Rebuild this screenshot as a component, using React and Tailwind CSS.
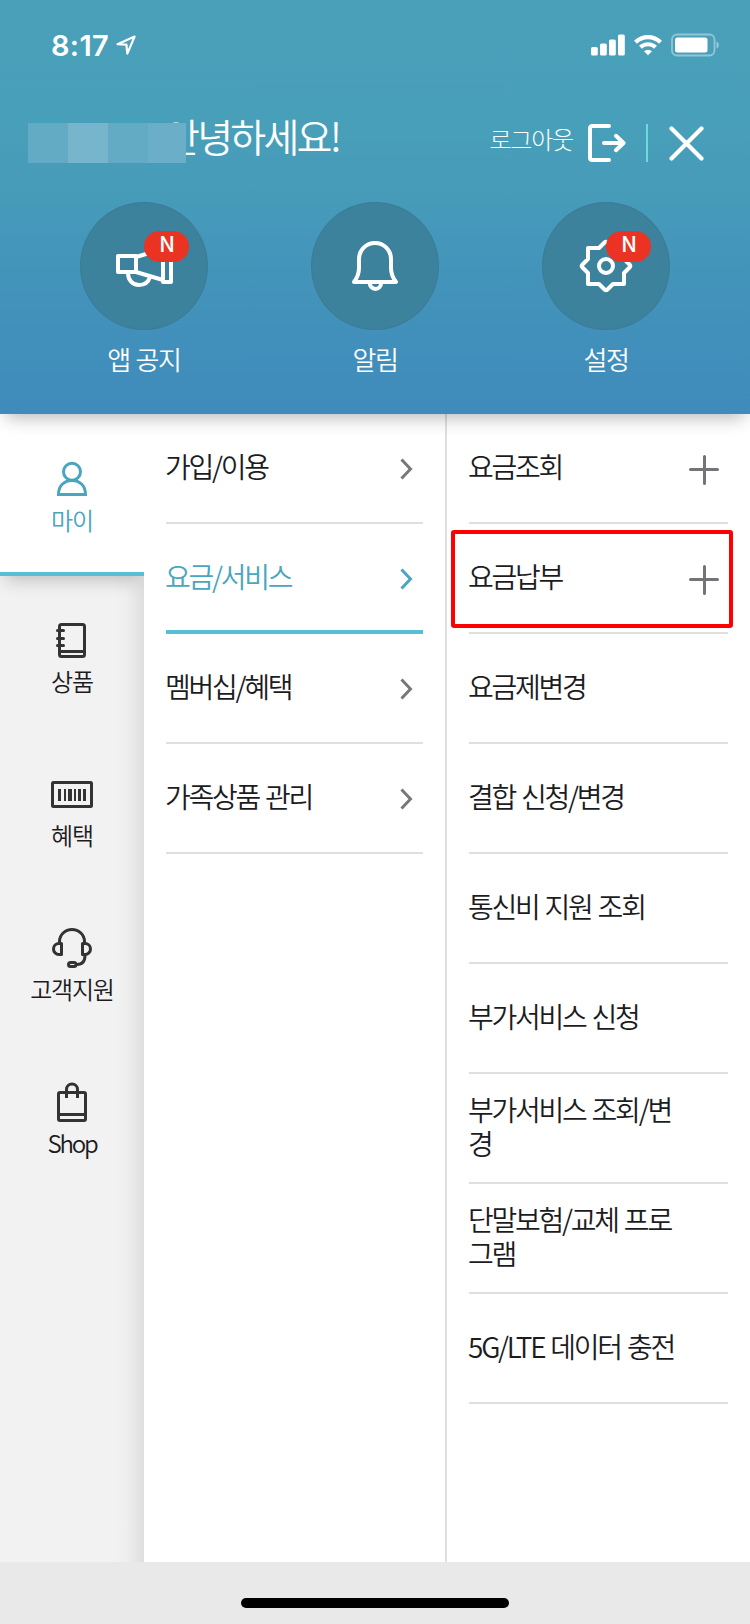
const font = "font-['Noto_Sans_CJK_KR','Noto_Sans',sans-serif]";

function StatusBar() {
  return (
    <div className="flex h-[88px] items-center justify-between pl-[51px] pr-[30px] pt-0.5">
      <div className="flex items-center gap-[7px]">
        <span className="font-['Inter',sans-serif] text-[29px] font-semibold leading-none tracking-[0.01em]">8:17</span>
        <svg width="20" height="20" viewBox="0 0 20 20" fill="none" stroke="white" strokeWidth="2.2" strokeLinejoin="round">
          <path d="M1.5 9.2 18.6 1.6 11.3 18.6 10.4 9.6Z" />
        </svg>
      </div>
      <div className="flex items-center gap-[9px]">
        <svg width="34" height="22" viewBox="0 0 34 22" fill="white">
          <rect x="0" y="13" width="6.8" height="8.5" rx="1.6" />
          <rect x="9" y="9.500" width="6.8" height="12" rx="1.6" />
          <rect x="18" y="5.500" width="6.8" height="16" rx="1.6" />
          <rect x="27" y="0.500" width="6.8" height="21" rx="1.6" />
        </svg>
        <svg width="28" height="22" viewBox="0 0 28 22" fill="none" stroke="white" strokeWidth="4.200">
          <path d="M1.500 8.300a17.800 17.800 0 0 1 25 0" />
          <path d="M6.500 13.300a10.800 10.800 0 0 1 15 0" />
          <path d="M14 21.200 10 17.200a6 6 0 0 1 8 0Z" fill="white" stroke="none" />
        </svg>
        <svg width="49" height="24" viewBox="0 0 49 24">
          <rect x="1" y="1.500" width="42.500" height="21" rx="5" fill="none" stroke="white" strokeOpacity="0.4" strokeWidth="1.800" />
          <rect x="4" y="4.500" width="32.500" height="15" rx="2.500" fill="white" />
          <path d="M45.500 8.500c3 .8 3 6.200 0 7Z" fill="white" fillOpacity="0.450" />
        </svg>
      </div>
    </div>
  );
}

function TopBar() {
  return (
    <div className="flex h-[108px] items-center pl-7 pr-[46px] pt-0.5">
      <div className="relative z-10 flex h-10 w-[158px]">
        <div className="w-10 bg-[#63abc5]" />
        <div className="w-10 bg-[#76b5cb]" />
        <div className="w-10 bg-[#63aac5]" />
        <div className="w-[38px] bg-[#6aaec7]" />
      </div>
      <h1 className="-ml-[22px] -mt-4 whitespace-nowrap text-[39px] font-[350] leading-[48px] tracking-[-0.070em]">안녕하세요!</h1>
      <div className="ml-auto flex items-center">
        <span className="-mt-[9px] whitespace-nowrap text-[24px] font-light leading-[36px] tracking-[-0.050em]">로그아웃</span>
        <svg className="ml-[15px]" width="38" height="38" viewBox="0 0 38 38" fill="none" stroke="white" strokeWidth="4" strokeLinecap="round" strokeLinejoin="round">
          <path d="M21 2H4.500Q2 2 2 4.500V33.500Q2 36 4.500 36H21" />
          <path d="M16 19H35M28 11.800 35.500 19 28 26.200" />
        </svg>
        <div className="ml-5 h-[38px] w-0.5 bg-[#6cdcd8]" />
        <svg className="ml-[21px]" width="35" height="35" viewBox="0 0 35 35" stroke="white" strokeWidth="4.200" strokeLinecap="round">
          <path d="M2.500 2.500 32.500 32.500M32.500 2.500 2.500 32.500" />
        </svg>
      </div>
    </div>
  );
}

function Shortcut({ label, badge, children }) {
  return (
    <div className="flex w-[231px] flex-col items-center">
      <div className="relative size-32 rounded-full border border-[#39758e]/50 bg-[#3d829d]">
        <svg className="-m-px" width="128" height="128" viewBox="0 0 128 128" fill="none" stroke="white" strokeWidth="4" strokeLinejoin="round">
          {children}
        </svg>
        {badge && (
          <div className="absolute left-[63px] top-7 flex h-[31px] w-[45px] justify-center rounded-2xl bg-[#ea3323] pl-px text-[22px] font-medium leading-[22px]">
            N
          </div>
        )}
      </div>
      <span className="mt-2.5 text-[26px] font-[350] leading-[38px] tracking-[-0.050em] [word-spacing:1px]">{label}</span>
    </div>
  );
}

function Header() {
  return (
    <header className="relative z-10 h-[414px] bg-[linear-gradient(180deg,#4aa0b9_0px,#489fb9_130px,#469bb9_200px,#4394bb_270px,#3f8bbb_414px)] text-white shadow-[0_10px_16px_-6px_rgba(30,30,40,0.3)]">
      <StatusBar />
      <TopBar />
      <div className="mt-1.5 flex justify-center">
        <Shortcut label="앱 공지" badge>
          <rect x="38" y="54" width="18" height="16" />
          <path d="M56 55 83 47M56 70 83 78" />
          <rect x="83" y="44" width="8" height="36" />
          <path d="M48 71c0 7 4.500 12 11 12 5.500 0 9.500-3 11-8" />
        </Shortcut>
        <Shortcut label="알림">
          <path d="M43 80C46 76 48 72 48 66V57a16 16 0 0 1 32 0V66c0 6 2 10 5 14Z" />
          <path d="M58.700 81a5.700 6 0 0 0 11.400 0" />
        </Shortcut>
        <Shortcut label="설정" badge>
          <path d="M62.500 40.500 57 46H46V57L40.500 62.500Q39 64 40.500 65.500L46 71V82H57L62.500 87.500Q64 89 65.500 87.500L71 82H82V71L87.500 65.500Q89 64 87.500 62.500L82 57V46H71L65.500 40.500Q64 39 62.500 40.500Z" />
          <circle cx="64" cy="64" r="7" />
        </Shortcut>
      </div>
    </header>
  );
}

const icons = {
  person: (
    <>
      <circle cx="21" cy="11.800" r="8.500" />
      <path d="M7.500 34.500C7.500 26 13 20.500 21 20.500S34.500 26 34.500 34.500Z" strokeLinejoin="miter" />
    </>
  ),
  notebook: (
    <>
      <rect x="8.500" y="3.500" width="25" height="32" rx="2" />
      <path d="M9 30.500H33M6.500 9.500H12.500M6.500 17.500H12.500M6.500 24.500H12.500" strokeLinecap="round" />
    </>
  ),
  barcode: (
    <>
      <rect x="1.500" y="7.500" width="39" height="24" rx="1" />
      <g fill="currentColor" stroke="none">
        <rect x="7" y="14" width="3" height="12" />
        <rect x="13" y="14" width="2" height="12" />
        <rect x="17" y="14" width="4" height="12" />
        <rect x="23" y="14" width="2" height="12" />
        <rect x="27" y="14" width="3" height="12" />
        <rect x="32" y="14" width="3" height="12" />
      </g>
    </>
  ),
  headset: (
    <>
      <path d="M8.500 15V12.500a12.500 12 0 0 1 25 0V15" />
      <path d="M10.500 14.500H8a5.500 5.500 0 0 0 0 11H10.500ZM31.500 14.500H34a5.500 5.500 0 0 1 0 11H31.500Z" />
      <path d="M34 26C34 32 31.500 35.500 26 35.500" />
      <rect x="17.500" y="33.500" width="7.500" height="4" rx="2" />
    </>
  ),
  bag: (
    <>
      <rect x="7.500" y="9.500" width="27" height="28" rx="1.500" />
      <path d="M8 31.500H34M15.500 15V6.500a5.500 5.500 0 0 1 11 0V15" />
    </>
  ),
};

function TabIcon({ name }) {
  return (
    <svg width="42" height="40" viewBox="0 0 42 40" overflow="visible" fill="none" stroke="currentColor" strokeWidth="3" strokeLinejoin="round">
      {icons[name]}
    </svg>
  );
}

function SideTab({ icon, label }) {
  return (
    <div className="flex h-[154px] flex-col items-center text-[#333]">
      <TabIcon name={icon} />
      <span className={icon === "bag" ? "mt-0.5 text-[24px] font-[350] leading-9 tracking-[-0.090em] text-[#1c1c1e]" : "mt-0.5 text-[24px] font-[350] leading-9 tracking-[-0.050em] text-[#1c1c1e]"}>{label}</span>
    </div>
  );
}

function Sidebar() {
  return (
    <nav className="w-36 bg-[#f2f2f2] bg-[linear-gradient(270deg,#dedede_0px,#e6e6e6_8px,#efefef_18px,#f2f2f2_28px)]">
      <div className="flex h-[162px] flex-col items-center border-b-4 border-[#57bfd5] bg-white pt-[46px] text-[#4aa5be] shadow-[0_10px_16px_-6px_rgba(30,30,40,0.25)]">
        <TabIcon name="person" />
        <span className="mt-0.5 text-[24px] font-[350] leading-9 tracking-[-0.050em]">마이</span>
      </div>
      <div className="pt-[45px]">
        <SideTab icon="notebook" label="상품" />
        <SideTab icon="barcode" label="혜택" />
        <SideTab icon="headset" label="고객지원" />
        <SideTab icon="bag" label="Shop" />
      </div>
    </nav>
  );
}

function CategoryRow({ label, active }) {
  return (
    <li className={active ? "flex h-[110px] items-center justify-between border-b-4 border-[#57bfd5] pr-[10px] text-[#4aa5be]" : "flex h-[110px] items-center justify-between border-b-2 border-[#dfdfdf] pr-[10px] text-[#77787b]"}>
      <span className={active ? "-ml-px -mt-[3px] text-[28px] font-[350] leading-[34px] tracking-[-0.080em]" : "-ml-px -mt-1 text-[28px] font-[350] leading-[34px] tracking-[-0.080em] text-[#1c1c1e] [word-spacing:2px]"}>{label}</span>
      <svg className={active ? "mt-1" : "mt-0.5"} width="13" height="22" viewBox="0 0 13 22" fill="none" stroke="currentColor" strokeWidth="3">
        <path d="M1.500 1.500 10.500 11 1.500 20.500" />
      </svg>
    </li>
  );
}

function MenuRow({ label, expandable, highlighted }) {
  return (
    <li className="relative flex h-[110px] items-center justify-between border-b-2 border-[#dfdfdf] pr-[9px]">
      <span className="-ml-px -mt-1 w-[216px] break-all text-[28px] font-[350] leading-[34px] tracking-[-0.080em] [word-spacing:2px]">{label}</span>
      {expandable && (
        <svg className="mt-1" width="30" height="30" viewBox="0 0 30 30" stroke="#737478" strokeWidth="3" strokeLinecap="round">
          <path d="M1.500 14.500H28.500M15.500 1.500V28.500" />
        </svg>
      )}
      {highlighted && <div className="absolute -left-[18px] top-[5.500px] h-[98px] w-[282px] rounded-[3px] border-4 border-[#ff0000]" />}
    </li>
  );
}

export default function App() {
  return (
    <div className={`${font} flex h-[1624px] w-[750px] flex-col bg-white`}>
      <Header />
      <main className="flex flex-1 text-[#1c1c1e]">
        <Sidebar />
        <ul className="relative w-[301px] bg-white pl-[22px] pr-[22px]">
          <CategoryRow label="가입/이용" />
          <CategoryRow label="요금/서비스" active />
          <CategoryRow label="멤버십/혜택" />
          <CategoryRow label="가족상품 관리" />
        </ul>
        <ul className="flex-1 border-l-2 border-[#dfdfdf] pl-[22px] pr-[22px]">
          <MenuRow label="요금조회" expandable />
          <MenuRow label="요금납부" expandable highlighted />
          <MenuRow label="요금제변경" />
          <MenuRow label="결합 신청/변경" />
          <MenuRow label="통신비 지원 조회" />
          <MenuRow label="부가서비스 신청" />
          <MenuRow label="부가서비스 조회/변경" />
          <MenuRow label="단말보험/교체 프로그램" />
          <MenuRow label="5G/LTE 데이터 충전" />
        </ul>
      </main>
      <footer className="flex h-[62px] justify-center bg-[#e9e9e9] pt-9">
        <div className="h-2.5 w-[268px] rounded-full bg-black" />
      </footer>
    </div>
  );
}
